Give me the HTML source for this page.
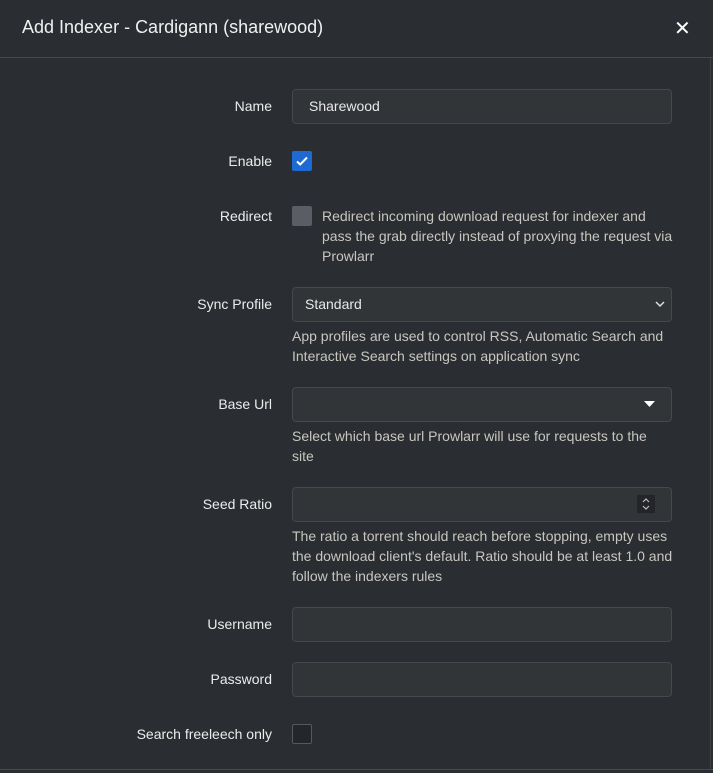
<!DOCTYPE html>
<html><head><style>
body{margin:0;width:713px;height:773px;background:#2a2d31;font-family:"Liberation Sans",sans-serif;color:#e1e2e3;overflow:hidden;position:relative}
.hd{position:absolute;left:0;top:0;width:713px;height:57px;border-bottom:1px solid #45484c}
.title{position:absolute;left:22px;top:17px;font-size:18px;color:#f0f0f0}
.x{position:absolute;left:674px;top:16px;font-size:20px;color:#fff}
.lbl{position:absolute;right:441px;font-size:14px;color:#ececec;text-align:right;white-space:nowrap}
.inp{position:absolute;left:292px;width:378px;height:33px;background:#323538;border:1px solid #45484c;border-radius:4px;font-size:14px;color:#e8e8e8;box-sizing:content-box}
.inp span{position:absolute;left:16px;top:8px}
.help{position:absolute;left:292px;width:375px;font-size:14px;line-height:20px;color:#c9c6c0}
.cb{position:absolute;left:292px;width:20px;height:20px;border-radius:2px;box-sizing:border-box}
.bot{position:absolute;left:0;top:769px;width:713px;height:1px;background:#45484c}
.sb{position:absolute;left:710px;top:58px;width:1px;height:711px;background:#3a3d41}
</style></head><body>
<div class="hd"><div class="title">Add Indexer - Cardigann (sharewood)</div><div class="x">✕</div></div>
<div class="sb"></div>
<div class="lbl" style="top:98px">Name</div>
<div class="inp" style="top:89px"><span>Sharewood</span></div>
<div class="lbl" style="top:153px">Enable</div>
<div class="cb" style="top:151px;background:#1e6ad2"><svg width="20" height="20"><path d="M5 10.5l3.2 3L15 6.5" stroke="#fff" stroke-width="2" fill="none"/></svg></div>
<div class="lbl" style="top:208px">Redirect</div>
<div class="cb" style="top:206px;background:#5a5d63"></div>
<div class="help" style="left:322px;top:206px;width:352px">Redirect incoming download request for indexer and pass the grab directly instead of proxying the request via Prowlarr</div>
<div class="lbl" style="top:296px">Sync Profile</div>
<div class="inp" style="top:287px"><span style="left:12px">Standard</span><svg style="position:absolute;right:6px;top:12px" width="10" height="8"><path d="M1 2l4 4 4-4" stroke="#ddd" stroke-width="1.5" fill="none"/></svg></div>
<div class="help" style="top:326px">App profiles are used to control RSS, Automatic Search and Interactive Search settings on application sync</div>
<div class="lbl" style="top:396px">Base Url</div>
<div class="inp" style="top:387px"><svg style="position:absolute;right:16px;top:13px" width="11" height="7"><path d="M0 0h11L5.5 6z" fill="#fff"/></svg></div>
<div class="help" style="top:426px;width:360px">Select which base url Prowlarr will use for requests to the site</div>
<div class="lbl" style="top:496px">Seed Ratio</div>
<div class="inp" style="top:487px"><div style="position:absolute;right:16px;top:7px;width:18px;height:18px;background:#23252a"><svg width="18" height="18"><path d="M6 7l3-3 3 3M6 11l3 3 3-3" stroke="#bbb" stroke-width="1.2" fill="none"/></svg></div></div>
<div class="help" style="top:526px;width:385px">The ratio a torrent should reach before stopping, empty uses the download client's default. Ratio should be at least 1.0 and follow the indexers rules</div>
<div class="lbl" style="top:616px">Username</div>
<div class="inp" style="top:607px"></div>
<div class="lbl" style="top:671px">Password</div>
<div class="inp" style="top:662px"></div>
<div class="lbl" style="top:726px">Search freeleech only</div>
<div class="cb" style="top:724px;background:#23262a;border:1px solid #55585c"></div>
<div class="bot"></div>
</body></html>
